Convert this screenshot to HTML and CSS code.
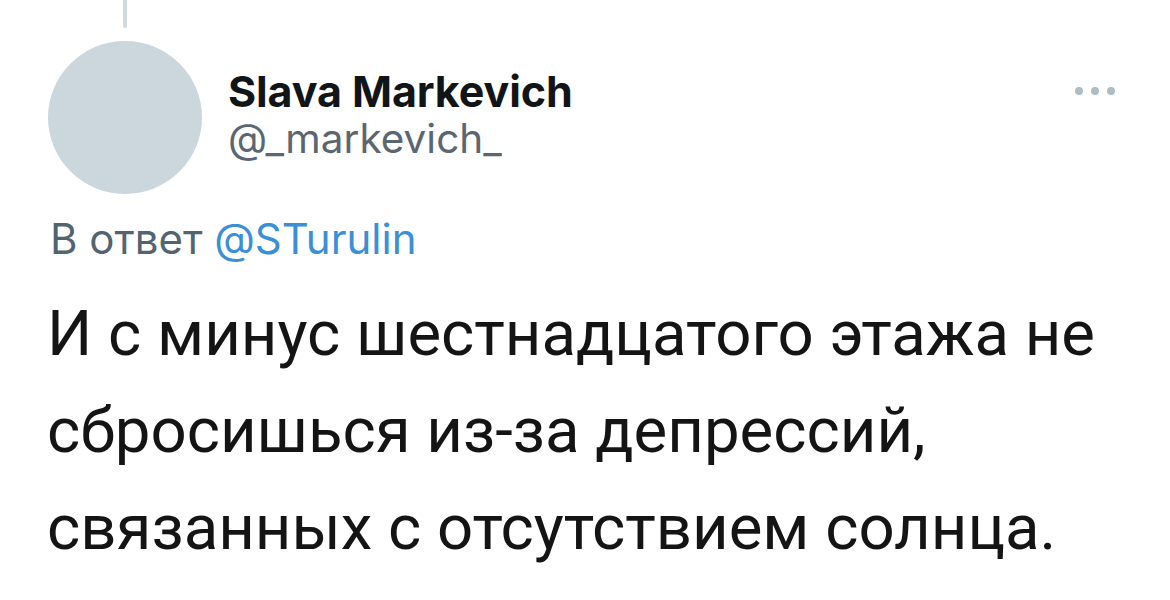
FILE: index.html
```html
<!DOCTYPE html>
<html lang="ru">
<head>
<meta charset="utf-8">
<link rel="stylesheet" href="styles.css">
</head>
<body>
<div class="tweet">
  <div class="thread"></div>
  <div class="header">
    <div class="avatar"></div>
    <div class="names">
      <div class="name">Slava Markevich</div>
      <div class="handle">@_markevich_</div>
    </div>
    <div class="more"><span></span><span></span><span></span></div>
  </div>
  <div class="reply">В ответ <span class="mention">@STurulin</span></div>
  <div class="text">И с минус шестнадцатого этажа не сбросишься из-за депрессий, связанных с отсутствием солнца.</div>
</div>
</body>
</html>
```

FILE: styles.css
```css
html, body {
  margin: 0;
  background: #ffffff;
}
.tweet {
  width: 1170px;
  height: 600px;
  font-family: Roboto, "Liberation Sans", sans-serif;
  color: #0f1419;
  overflow: hidden;
}
.thread {
  width: 4px;
  height: 28px;
  margin-left: 123px;
  background: #cfd9de;
  border-radius: 0 0 2px 2px;
}
.header {
  display: flex;
  align-items: flex-start;
  margin-top: 13px;
  padding-left: 48px;
}
.avatar {
  width: 154px;
  height: 153px;
  border-radius: 50%;
  background: #ccd6dd;
  flex: none;
}
.names {
  margin-left: 26px;
  margin-top: 26px;
  flex: 1;
}
.name {
  font-family: Inter, Roboto, sans-serif;
  font-size: 43px;
  font-weight: 700;
  line-height: 48px;
  letter-spacing: -0.1px;
  color: #111518;
}
.handle {
  font-family: Inter, Roboto, sans-serif;
  font-size: 40.5px;
  line-height: 46px;
  color: #5b6670;
  margin-top: 1px;
}
.more {
  display: flex;
  gap: 8px;
  margin-right: 55px;
  margin-top: 46px;
}
.more span {
  width: 8px;
  height: 8px;
  border-radius: 50%;
  background: #aebbc5;
}
.reply {
  margin-top: 21px;
  padding-left: 50px;
  font-family: Inter, Roboto, sans-serif;
  font-size: 42px;
  line-height: 48px;
  color: #536471;
}
.mention {
  color: #3a8fd6;
}
.text {
  margin-top: 22px;
  padding-left: 47px;
  padding-right: 50px;
  font-size: 63.5px;
  line-height: 97px;
  color: #141414;
}
```
